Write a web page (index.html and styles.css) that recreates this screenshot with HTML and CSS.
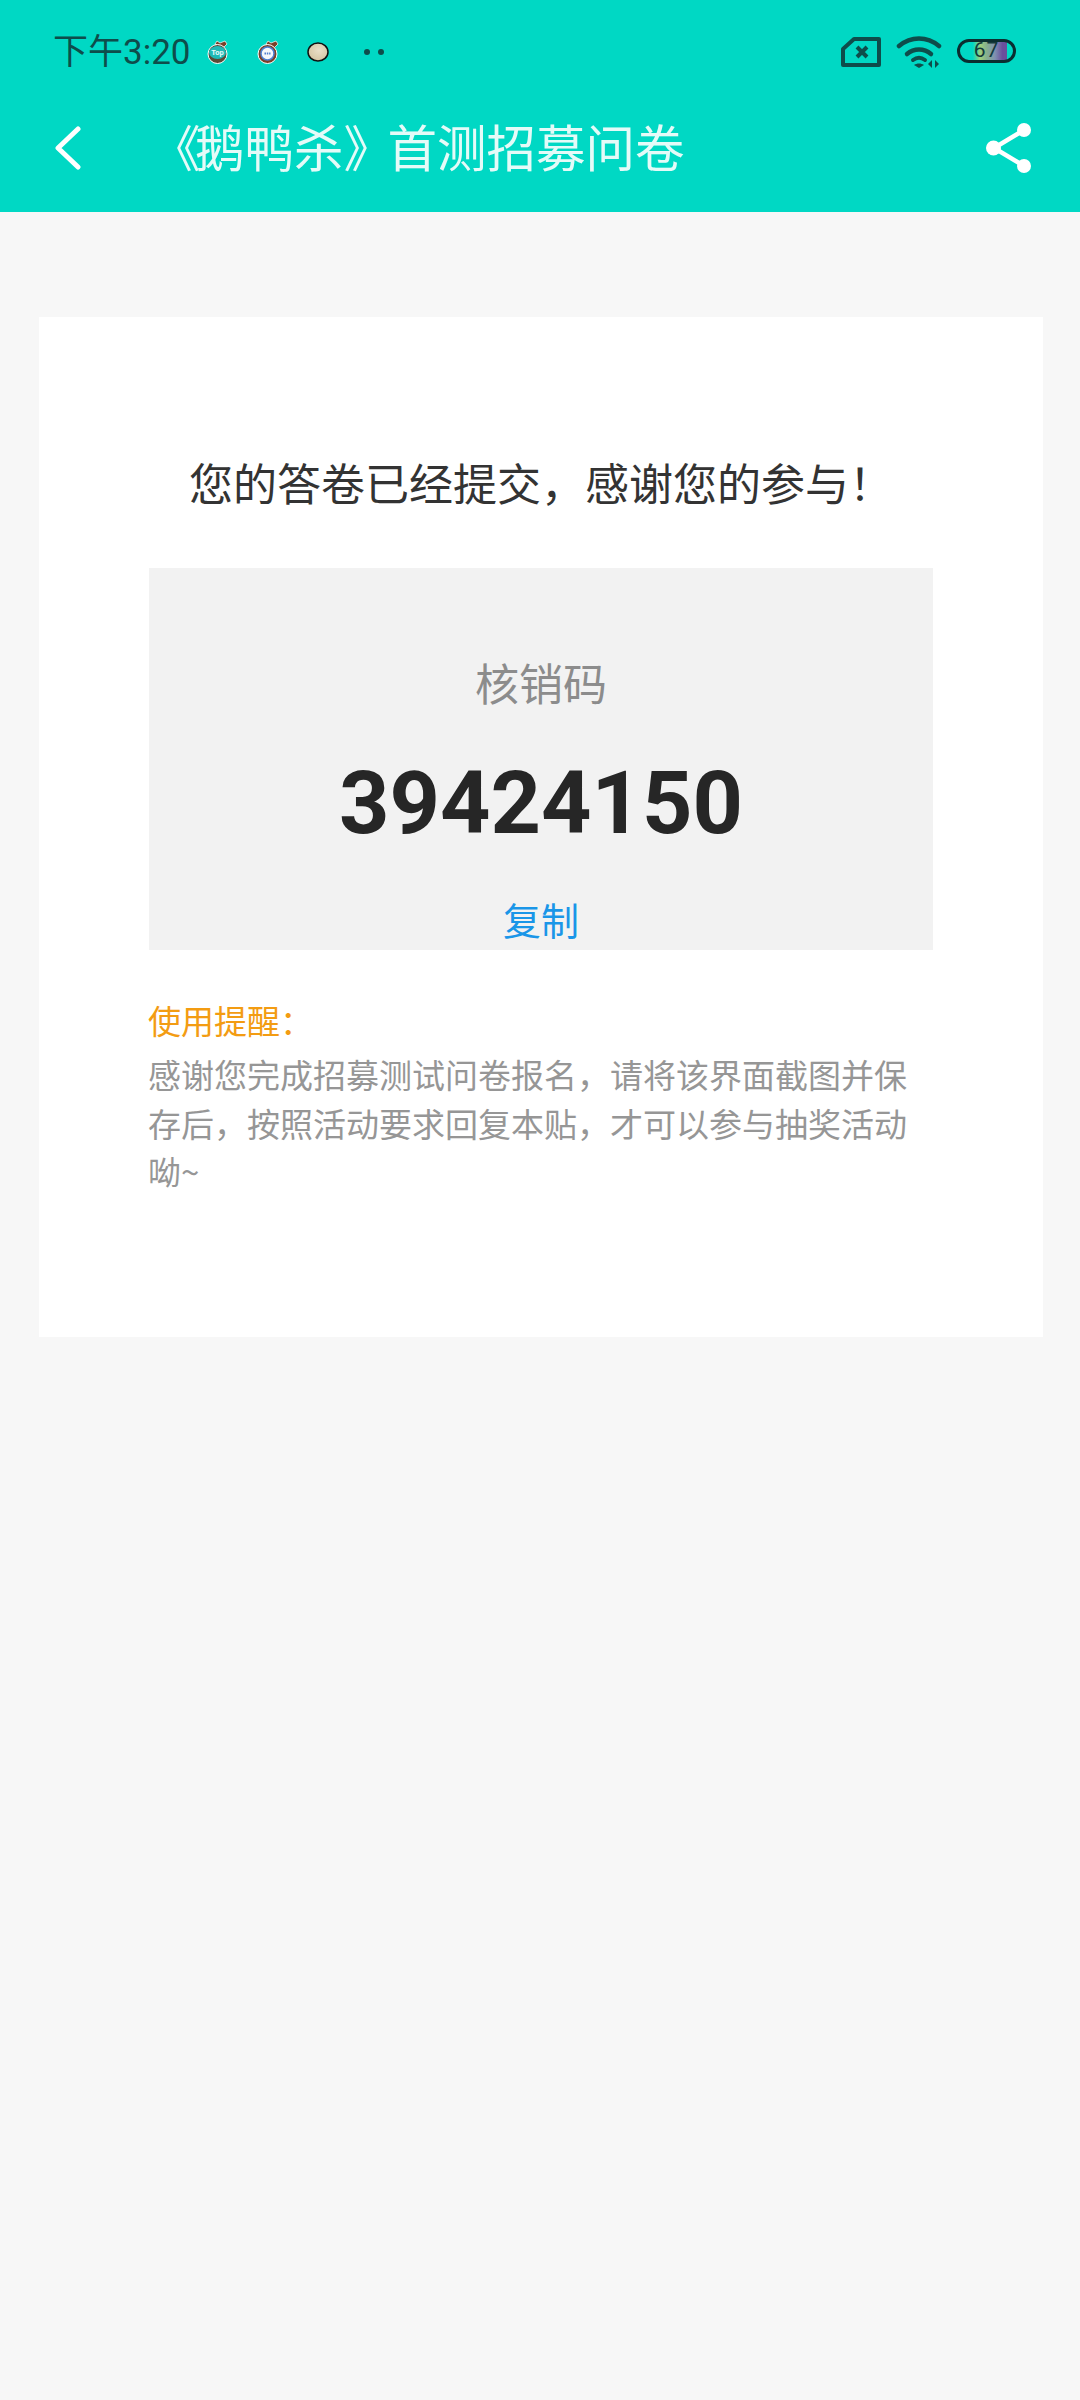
FILE: index.html

```html
<!DOCTYPE html>
<html lang="zh">
<head>
  <meta charset="UTF-8">
  <meta name="viewport" content="width=device-width, initial-scale=1.0">
  <title>《鹅鸭杀》首测招募问卷</title>
  <link rel="stylesheet" href="styles.css">
</head>
<body>
  <header class="top">
    <div class="status">
      <span class="time">下午3:20</span>
      <div class="notifs">
        <svg width="22" height="24" viewBox="0 0 22 24"><path d="M8 4L10 1l3 2 5-2 2 3-4 4z" fill="#7a4028" stroke="#fff" stroke-width=".7"/><circle cx="10.500" cy="14" r="9.500" fill="#5b4a36" stroke="#fff" stroke-width="1"/><ellipse cx="10.500" cy="12.500" rx="8.500" ry="6.500" fill="#1fb9b6"/><text class="bag-text" x="10.500" y="15">Top</text></svg>
        <svg width="22" height="24" viewBox="0 0 22 24"><path d="M9 4l2-3 3 2 5-2 2 3-4 4z" fill="#7a4028" stroke="#fff" stroke-width=".7"/><circle cx="10.500" cy="14" r="9.500" fill="#7a4028" stroke="#fff" stroke-width="1"/><circle cx="10.500" cy="13.500" r="6.500" fill="#f4f7fc" stroke="#4f7fd0" stroke-width="1.500"/><path d="M7.500 13.500h6" stroke="#4f7fd0" stroke-width="2" stroke-dasharray="1.500 .8"/></svg>
        <svg width="22" height="20" viewBox="0 0 22 20"><defs><radialGradient id="bun" cx=".55" cy=".4" r=".65"><stop offset="0" stop-color="#e9dfc8"/><stop offset="1" stop-color="#d3c3a0"/></radialGradient></defs><ellipse cx="11" cy="10" rx="10" ry="9" fill="url(#bun)" stroke="#111" stroke-width="1.500"/></svg>
        <span class="dots"><i></i><i></i></span>
      </div>
      <div class="sys">
        <svg width="40" height="30" viewBox="0 0 40 30"><path d="M13 2h25v26H2V12z" fill="none" stroke="#0e4d4b" stroke-width="4" stroke-linejoin="round"/><path d="M16 10l10 10M26 10L16 20" stroke="#0e4d4b" stroke-width="4"/></svg>
        <svg width="46" height="32" viewBox="0 0 46 32"><path d="M3 10c12-10 28-10 40 0" fill="none" stroke="#0e4d4b" stroke-width="4.500" stroke-linecap="round"/><path d="M11 18c7-6 17-6 24 0" fill="none" stroke="#0e4d4b" stroke-width="4.500" stroke-linecap="round"/><path d="M17 24c4-3 8-3 12 0" fill="none" stroke="#0e4d4b" stroke-width="4" stroke-linecap="round"/><path d="M23 32l-5-3c3-2 7-2 10 0z" fill="#0e4d4b"/><path d="M36 24v8l-4-4zM39 24v8l4-4z" fill="#0e4d4b"/></svg>
        <div class="batt"><span class="batt-num">67</span></div>
      </div>
    </div>
    <div class="bar">
      <svg class="back" width="26" height="44" viewBox="0 0 26 44"><path d="M23 3L3 22l20 19" fill="none" stroke="#fff" stroke-width="5" stroke-linecap="round" stroke-linejoin="round"/></svg>
      <h1 class="title"><span class="quote">《</span>鹅鸭杀<span class="quote">》</span>首测招募问卷</h1>
      <svg class="share" width="45" height="50" viewBox="0 0 45 50"><path d="M38 7L8 25l30 18" fill="none" stroke="#fff" stroke-width="4.500"/><circle cx="38" cy="7" r="7" fill="#fff"/><circle cx="7.500" cy="25" r="7.500" fill="#fff"/><circle cx="38" cy="43" r="7" fill="#fff"/></svg>
    </div>
  </header>

  <main class="card">
    <h2 class="done">您的答卷已经提交，感谢您的参与！</h2>
    <div class="code-box">
      <div class="code-label">核销码</div>
      <div class="code">39424150</div>
      <div class="copy">复制</div>
    </div>
    <div class="note">
      <div class="note-title">使用提醒：</div>
      <p class="note-text">感谢您完成招募测试问卷报名，请将该界面截图并保存后，按照活动要求回复本贴，才可以参与抽奖活动呦~</p>
    </div>
  </main>
</body>
</html>
```

FILE: styles.css

```css
* {
  box-sizing: border-box;
}
body {
  margin: 0;
  background: #f7f7f7;
  font-family: "Noto Sans CJK SC", "Noto Sans", sans-serif;
  min-height: 2400px;
}
.top {
  background: #00d8c4;
  height: 212px;
  padding: 0 49px 0 54px;
}
.status {
  display: flex;
  align-items: center;
  height: 104px;
  color: #0e4d4b;
}
.time {
  font-family: Roboto, "Noto Sans CJK SC", sans-serif;
  font-size: 35px;
  line-height: 1;
  width: 153px;
  margin-left: -1px;
  margin-right: 1px;
}
.notifs {
  display: flex;
  align-items: center;
  gap: 28px;
}
.bag-text {
  font-family: Roboto, sans-serif;
  font-size: 7.500px;
  font-weight: 700;
  fill: #e8fbfb;
  text-anchor: middle;
}
.dots {
  display: flex;
  gap: 8px;
  margin-left: 7px;
}
.dots i {
  width: 6px;
  height: 6px;
  border-radius: 50%;
  background: #0e4d4b;
}
.sys {
  margin-left: auto;
  margin-right: 15px;
  display: flex;
  align-items: center;
  gap: 15px;
}
.batt {
  width: 59px;
  height: 24px;
  margin-top: -3px;
  border: 3px solid #0a2e30;
  border-radius: 12px;
  background: linear-gradient(90deg, #00d8c4 24%, #9dcf7c 38%, #86b08e 50%, #7f8fb0 66%, #6a4f9c 80%, #6a4f9c 88%, #00d8c4 89%);
  display: flex;
  align-items: center;
  justify-content: center;
}
.batt-num {
  font-family: Roboto, sans-serif;
  font-size: 21px;
  line-height: 1;
  letter-spacing: 1px;
  color: #14393a;
}
.bar {
  display: flex;
  align-items: center;
  height: 86px;
  padding-top: 2px;
}
.back {
  margin-left: 1px;
}
.title {
  margin: -6px 0 0 70px;
  font-size: 49.500px;
  font-weight: 400;
  color: #e4fbf8;
}
.quote {
  letter-spacing: -5.500px;
}
.share {
  margin-left: auto;
}
.card {
  background: #fff;
  margin: 105px 37px 0 39px;
  height: 1020px;
  padding: 0 110px;
}
.done {
  margin: 0;
  padding-top: 133px;
  height: 251px;
  text-align: center;
  font-size: 44px;
  line-height: 64px;
  font-weight: 400;
  color: #333;
}
.code-box {
  background: #f2f2f2;
  height: 382px;
  text-align: center;
  padding-top: 84px;
}
.code-label {
  font-size: 44px;
  line-height: 60px;
  color: #8c8c8c;
}
.code {
  font-family: Roboto, sans-serif;
  font-weight: 700;
  font-size: 88px;
  line-height: 106px;
  margin-top: 38px;
  color: #262626;
}
.copy {
  font-size: 38px;
  line-height: 50px;
  margin-top: 38px;
  color: #1a96e8;
}
.note {
  padding-top: 46px;
  margin-left: -1px;
  font-size: 33px;
}
.note-title {
  line-height: 49px;
  color: #f39c12;
}
.note-text {
  margin: 5px 0 0;
  line-height: 48.500px;
  color: #969696;
}
```
